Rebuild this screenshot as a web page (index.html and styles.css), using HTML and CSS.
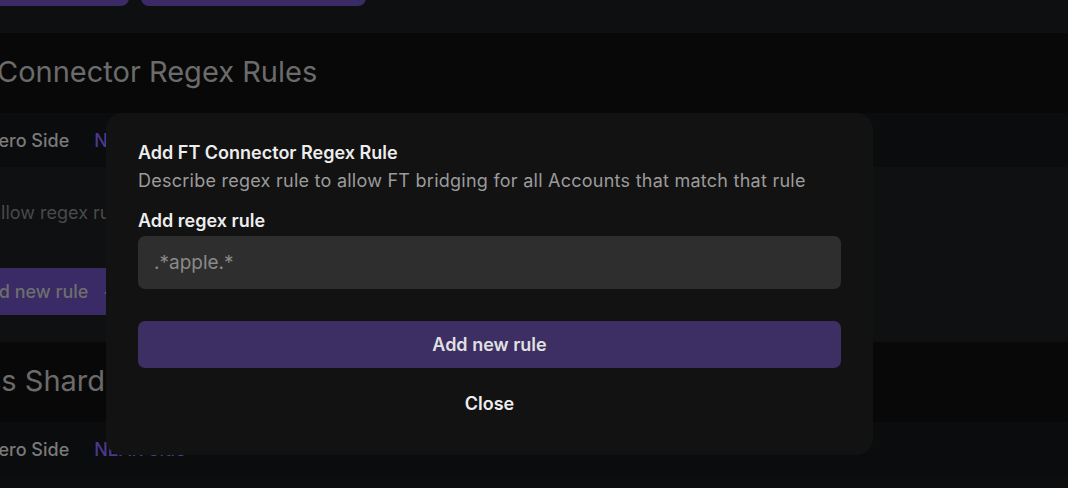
FILE: index.html
```html
<!DOCTYPE html>
<html lang="en">
<head>
<meta charset="utf-8">
<title>FT Connector Regex Rules</title>
<link rel="stylesheet" href="styles.css">
</head>
<body>
<div class="page">
  <div class="top-actions">
    <button class="bg-btn bg-btn-a">Save</button>
    <button class="bg-btn bg-btn-b">Deploy</button>
  </div>

  <section class="block">
    <header class="block-head"><h2 class="block-title">FT Connector Regex Rules</h2></header>
    <nav class="tabs">
      <span class="tab">Calimero Side</span>
      <span class="tab tab-active">NEAR Side</span>
    </nav>
    <div class="card">
      <p class="card-text">allow regex rules for FT bridging</p>
      <button class="card-btn">Add new rule <span class="plus">+</span></button>
    </div>
  </section>

  <section class="block">
    <header class="block-head"><h2 class="block-title block-title-shard">Cross Shard</h2></header>
    <nav class="tabs">
      <span class="tab">Calimero Side</span>
      <span class="tab tab-active">NEAR Side</span>
    </nav>
    <div class="tail"></div>
  </section>
</div>

<div class="overlay">
  <div class="modal">
    <h3 class="modal-title">Add FT Connector Regex Rule</h3>
    <p class="modal-desc">Describe regex rule to allow FT bridging for all Accounts that match that rule</p>
    <label class="field-label" for="rule">Add regex rule</label>
    <input class="field-input" id="rule" type="text" placeholder=".*apple.*">
    <button class="btn-add">Add new rule</button>
    <button class="btn-close">Close</button>
  </div>
</div>
</body>
</html>
```
FILE: styles.css
```css
* { box-sizing: border-box; }
html, body {
  margin: 0;
  height: 100%;
  overflow: hidden;
  background: #0f1011;
  font-family: Inter, "Noto Sans", sans-serif;
}
.page {
  margin-left: -47px;
}
.top-actions {
  height: 33px;
  background: #0e0f10;
  display: flex;
  gap: 12px;
}
.bg-btn {
  border: 0;
  margin-top: -40px;
  height: 46px;
  border-radius: 8px;
  background: #3a2a66;
  color: transparent;
  font: inherit;
}
.bg-btn-a { width: 176px; }
.bg-btn-b { width: 225px; }

.block-head {
  height: 80px;
  background: #080808;
  display: flex;
  align-items: center;
}
.block-title {
  margin: 0;
  font-weight: 400;
  font-size: 29px;
  color: #6b6b6b;
  padding-bottom: 4px;
}
.block-title-shard { text-indent: -16px; }
.tabs {
  height: 54px;
  background: #0b0c0d;
  display: flex;
  align-items: center;
  gap: 25px;
  padding-left: 0;
}
.tab {
  font-size: 18px;
  font-weight: 500;
  color: #7a7a7a;
}
.tab:first-child { margin-left: -3px; }
.tab-active { color: #4a3a8c; }

.card {
  height: 175px;
  background: #0f1011;
  padding-top: 33px;
}
.card-text {
  margin: 0 0 0 38px;
  font-size: 18px;
  color: #4a4a4a;
  line-height: 26px;
}
.card-btn {
  margin-top: 42px;
  height: 47px;
  width: 170px;
  text-align: left;
  border: 0;
  border-radius: 6px;
  background: #3a2a66;
  color: #6e6e6e;
  font: inherit;
  font-size: 18px;
  font-weight: 500;
  padding: 0 0 0 22px;
}
.plus { margin-left: 10px; }

.block + .block .tabs { height: 55px; }
.tail {
  height: 22px;
  background: #0d0e0f;
}

.overlay {
  position: fixed;
  inset: 0;
}
.modal {
  margin: 113px 0 0 106px;
  width: 767px;
  height: 342px;
  background: #121212;
  border-radius: 16px;
  padding: 26px 32px 28px;
  display: flex;
  flex-direction: column;
}
.modal-title {
  margin: 0;
  font-size: 18px;
  line-height: 28px;
  font-weight: 600;
  color: #ededed;
}
.modal-desc {
  margin: 0;
  font-size: 18px;
  line-height: 28px;
  letter-spacing: 0.25px;
  color: #9b9b9b;
}
.field-label {
  margin-top: 14px;
  font-size: 18px;
  line-height: 24px;
  font-weight: 600;
  color: #ededed;
}
.field-input {
  margin-top: 3px;
  height: 53px;
  border: 0;
  border-radius: 7px;
  background: #2e2e2e;
  padding: 0 16px;
  font-family: inherit;
  font-size: 19px;
  color: #e0e0e0;
  outline: none;
}
.field-input::placeholder { color: #8a8a8a; }
.btn-add {
  margin-top: 32px;
  height: 47px;
  border: 0;
  border-radius: 7px;
  background: #3d2e63;
  color: #e0e0e0;
  font-family: inherit;
  font-size: 18px;
  font-weight: 600;
}
.btn-close {
  margin-top: 12px;
  height: 47px;
  border: 0;
  background: transparent;
  color: #ededed;
  font-family: inherit;
  font-size: 18px;
  font-weight: 600;
}
```
